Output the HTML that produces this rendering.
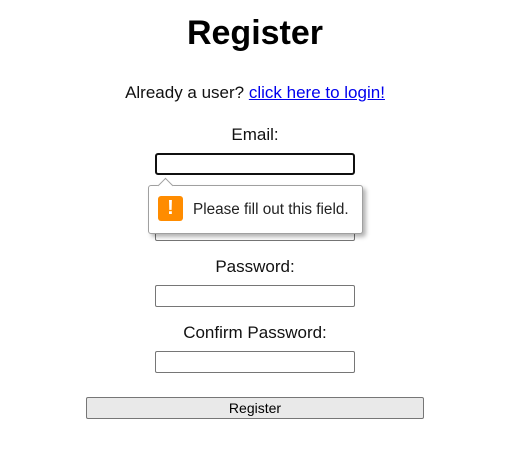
<!DOCTYPE html>
<html><head><style>
body{margin:0;width:524px;height:452px;background:#fff;font-family:"Liberation Sans",sans-serif;position:relative;overflow:hidden}
.c{position:absolute;left:0;width:510px;text-align:center}
h1{margin:0;font-size:34px;font-weight:bold;color:#000}
.t{font-size:17px;color:#111}
a{color:#00e}
.in{position:absolute;left:155px;width:198px;height:20px;border:1px solid #767676;border-radius:2px;background:#fff}
.btn{position:absolute;left:86px;top:397px;width:336px;height:20px;border:1px solid #767676;border-radius:2px;background:#e9e9e9;font-size:14px;text-align:center;line-height:21px;color:#000}
.tip{position:absolute;left:148px;top:185px;width:213px;height:47px;border:1px solid #a0a0a0;border-radius:3px;background:#fff;box-shadow:3px 3px 4px rgba(0,0,0,.3)}
.ar{position:absolute;background:#fff;border-left:1px solid #a0a0a0;border-top:1px solid #a0a0a0;transform:rotate(45deg);transform-origin:center}
.ic{position:absolute;left:9px;top:10px;width:25px;height:25px;background:#ff8c00;border-radius:3px;color:#fff;font-weight:bold;font-size:20px;text-align:center;line-height:25px}
.tt{position:absolute;left:44px;top:15px;font-size:15.3px;color:#222}
</style></head><body>
<div class="c" style="top:14px"><h1>Register</h1></div>
<div class="c t" style="top:83px">Already a user? <a href="#">click here to login!</a></div>
<div class="c t" style="top:125px">Email:</div>
<div class="in" style="top:153px;border:2px solid #101010;width:196px;height:18px;border-radius:3px"></div>
<div class="in" style="top:219px"></div>
<div class="c t" style="top:257px">Password:</div>
<div class="in" style="top:285px"></div>
<div class="c t" style="top:323px">Confirm Password:</div>
<div class="in" style="top:351px"></div>
<div class="btn">Register</div>
<div class="tip"><div class="ic">!</div><div class="tt">Please fill out this field.</div></div>
<div class="ar" style="left:160px;top:180px;width:10px;height:10px"></div>
</body></html>
